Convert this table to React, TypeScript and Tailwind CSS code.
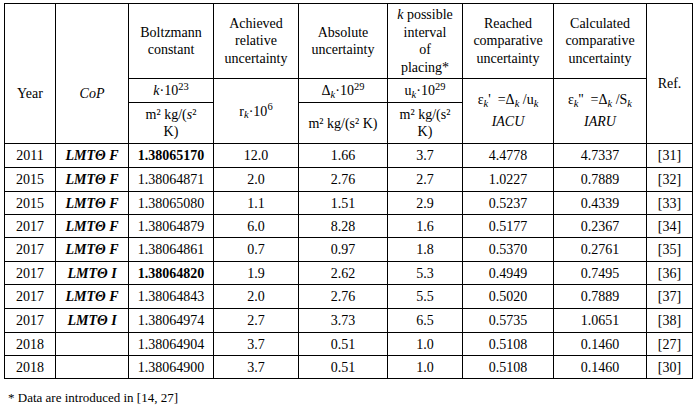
import React from 'react';

type Row = {
  year: string;
  cop: string;
  k: string;
  bold?: boolean;
  r: string;
  abs: string;
  u: string;
  e1: string;
  e2: string;
  ref: string;
  h: string;
};

const rows: Row[] = [
  { year: '2011', cop: 'F', k: '1.38065170', bold: true, r: '12.0', abs: '1.66', u: '3.7', e1: '4.4778', e2: '4.7337', ref: '[31]', h: 'h-[24px]' },
  { year: '2015', cop: 'F', k: '1.38064871', r: '2.0', abs: '2.76', u: '2.7', e1: '1.0227', e2: '0.7889', ref: '[32]', h: 'h-[24px]' },
  { year: '2015', cop: 'F', k: '1.38065080', r: '1.1', abs: '1.51', u: '2.9', e1: '0.5237', e2: '0.4339', ref: '[33]', h: 'h-[23px]' },
  { year: '2017', cop: 'F', k: '1.38064879', r: '6.0', abs: '8.28', u: '1.6', e1: '0.5177', e2: '0.2367', ref: '[34]', h: 'h-[23px]' },
  { year: '2017', cop: 'F', k: '1.38064861', r: '0.7', abs: '0.97', u: '1.8', e1: '0.5370', e2: '0.2761', ref: '[35]', h: 'h-[24px]' },
  { year: '2017', cop: 'I', k: '1.38064820', bold: true, r: '1.9', abs: '2.62', u: '5.3', e1: '0.4949', e2: '0.7495', ref: '[36]', h: 'h-[23px]' },
  { year: '2017', cop: 'F', k: '1.38064843', r: '2.0', abs: '2.76', u: '5.5', e1: '0.5020', e2: '0.7889', ref: '[37]', h: 'h-[24px]' },
  { year: '2017', cop: 'I', k: '1.38064974', r: '2.7', abs: '3.73', u: '6.5', e1: '0.5735', e2: '1.0651', ref: '[38]', h: 'h-[24px]' },
  { year: '2018', cop: '', k: '1.38064904', r: '3.7', abs: '0.51', u: '1.0', e1: '0.5108', e2: '0.1460', ref: '[27]', h: 'h-[23px]' },
  { year: '2018', cop: '', k: '1.38064900', r: '3.7', abs: '0.51', u: '1.0', e1: '0.5108', e2: '0.1460', ref: '[30]', h: 'h-[23px]' },
];

const cell = 'border border-black text-center align-middle p-0';

export default function App() {
  return (
    <div className="w-[695px] h-[407px] bg-white text-black font-[family-name:Liberation_Serif,serif] text-[14px] overflow-hidden">
      <table className="ml-[4px] mt-[3px] w-[688px] table-fixed border-collapse">
        <colgroup>
          <col className="w-[51px]" />
          <col className="w-[73px]" />
          <col className="w-[85px]" />
          <col className="w-[85px]" />
          <col className="w-[89px]" />
          <col className="w-[75px]" />
          <col className="w-[91px]" />
          <col className="w-[93px]" />
          <col className="w-[46px]" />
        </colgroup>
        <thead>
          <tr className="h-[75px] leading-[17.5px]">
            <th rowSpan={3} className={`${cell} font-normal pt-[40px]`}>Year</th>
            <th rowSpan={3} className={`${cell} font-normal italic pt-[40px]`}>CoP</th>
            <th className={`${cell} font-normal`}>Boltzmann<br />constant</th>
            <th className={`${cell} font-normal`}>Achieved<br />relative<br />uncertainty</th>
            <th className={`${cell} font-normal`}>Absolute<br />uncertainty</th>
            <th className={`${cell} font-normal`}><i>k</i> possible<br />interval<br />of<br />placing*</th>
            <th className={`${cell} font-normal`}>Reached<br />comparative<br />uncertainty</th>
            <th className={`${cell} font-normal`}>Calculated<br />comparative<br />uncertainty</th>
            <th rowSpan={3} className={`${cell} font-normal pt-[20px]`}>Ref.</th>
          </tr>
          <tr className="h-[24px]">
            <th className={`${cell} font-normal`}><i>k</i>·10<sup>23</sup></th>
            <th rowSpan={2} className={`${cell} font-normal`}>r<sub className="italic">k</sub>·10<sup>6</sup></th>
            <th className={`${cell} font-normal`}>Δ<sub className="italic">k</sub>·10<sup>29</sup></th>
            <th className={`${cell} font-normal`}>u<sub className="italic">k</sub>·10<sup>29</sup></th>
            <th rowSpan={2} className={`${cell} font-normal leading-[22px]`}>
              ε<sub className="italic">k</sub>' &nbsp;=Δ<sub className="italic">k</sub> /u<sub className="italic">k</sub>
              <br />
              <i>IACU</i>
            </th>
            <th rowSpan={2} className={`${cell} font-normal leading-[22px]`}>
              ε<sub className="italic">k</sub>'' &nbsp;=Δ<sub className="italic">k</sub> /S<sub className="italic">k</sub>
              <br />
              <i>IARU</i>
            </th>
          </tr>
          <tr className="h-[41px] leading-[17px]">
            <th className={`${cell} font-normal`}>m² kg/(<i>s</i>²<br />K)</th>
            <th className={`${cell} font-normal`}>m² kg/(s² K)</th>
            <th className={`${cell} font-normal`}>m² kg/(s²<br />K)</th>
          </tr>
        </thead>
        <tbody>
          {rows.map((r, i) => (
            <tr key={i} className={r.h}>
              <td className={cell}>{r.year}</td>
              <td className={`${cell} font-bold italic`}>{r.cop ? <>LMT<span>Θ</span> {r.cop}</> : null}</td>
              <td className={`${cell} ${r.bold ? 'font-bold' : ''}`}>{r.k}</td>
              <td className={cell}>{r.r}</td>
              <td className={cell}>{r.abs}</td>
              <td className={cell}>{r.u}</td>
              <td className={cell}>{r.e1}</td>
              <td className={cell}>{r.e2}</td>
              <td className={cell}>{r.ref}</td>
            </tr>
          ))}
        </tbody>
      </table>
      <p className="ml-[8px] mt-[11px] text-[13px] leading-[15px]">* Data are introduced in [14, 27]</p>
    </div>
  );
}
